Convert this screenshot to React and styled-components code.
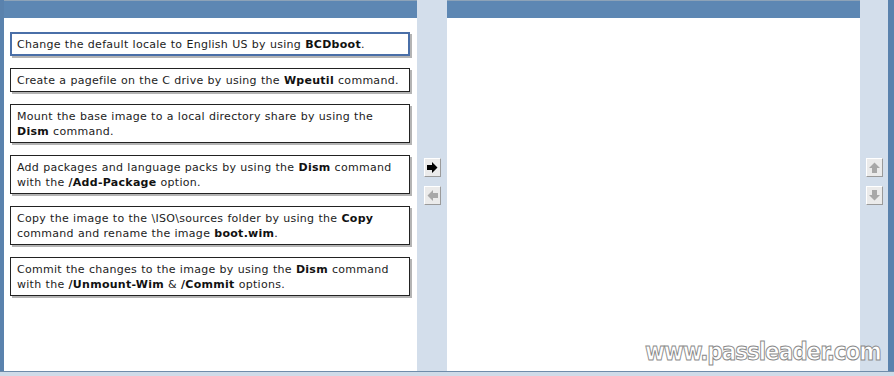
import React from 'react';
import styled, { createGlobalStyle } from 'styled-components';

const GlobalStyle = createGlobalStyle`
  html, body {
    margin: 0;
    padding: 0;
    background: #ffffff;
  }
`;

const Frame = styled.div`
  position: relative;
  width: 894px;
  height: 376px;
  display: flex;
  flex-direction: column;
  font-family: 'DejaVu Sans', Verdana, sans-serif;
  overflow: hidden;
`;

const Main = styled.div`
  display: flex;
  height: 371px;
`;

const Edge = styled.div`
  width: ${(p) => p.w}px;
  flex-shrink: 0;
  background: #5a82ad;
`;

const Panel = styled.div`
  width: 413px;
  flex-shrink: 0;
  display: flex;
  flex-direction: column;
  background: #ffffff;
`;

const TopBar = styled.div`
  height: 18px;
  background: #5d87b3;
  border-top: 1px solid #8da3b8;
  box-sizing: border-box;
`;

const List = styled.div`
  display: flex;
  flex-direction: column;
  gap: 12px;
  padding: 14px 0 0 6px;
`;

const Item = styled.div`
  width: 400px;
  box-sizing: border-box;
  border: ${(p) => (p.selected ? '2px solid #4a6fa8' : '1px solid #222')};
  padding: ${(p) => (p.selected ? '3px 5px 2px' : '4px 6px 3px')};
  background: #ffffff;
  box-shadow: 2px 2px 0 #b4b4b4;
  font-size: 11px;
  line-height: 15px;
  word-spacing: 0.3px;
  letter-spacing: 0.28px;
  color: #1c1c1c;

  b {
    font-weight: bold;
    color: #111;
  }
`;

const Rail = styled.div`
  width: ${(p) => p.w}px;
  flex-shrink: 0;
  background: #d3deeb;
  display: flex;
  flex-direction: column;
  align-items: center;
  gap: 9px;
  padding-top: 158px;
  box-sizing: border-box;
`;

const ArrowButton = styled.div`
  width: 17px;
  height: 19px;
  box-sizing: border-box;
  background: #ebebeb;
  border-top: 1px solid #ffffff;
  border-left: 1px solid #ffffff;
  border-right: 1px solid #9a9a9a;
  border-bottom: 1px solid #9a9a9a;
  display: flex;
  align-items: center;
  justify-content: center;
`;

const Footer = styled.div`
  height: 5px;
  background: #cfdbe8;
  border-top: 1px solid #6f8caa;
  box-sizing: border-box;
`;

const Watermark = styled.div`
  position: absolute;
  left: 645px;
  top: 338px;
  font-family: 'DejaVu Sans', sans-serif;
  font-weight: bold;
  font-size: 24px;
  letter-spacing: -1.2px;
  color: #ffffff;
  -webkit-text-stroke: 1px #8a8a8a;
  transform: scaleX(0.9);
  transform-origin: left top;
  white-space: nowrap;
`;

const Arrow = ({ dir, color }) => {
  const rot = { right: 0, left: 180, up: 270, down: 90 }[dir];
  return (
    <svg width="11" height="11" viewBox="0 0 11 11">
      <g transform={`rotate(${rot} 5.5 5.5)`}>
        <polygon points="0,3 5,3 5,0 10.5,5.5 5,11 5,8 0,8" fill={color} />
      </g>
    </svg>
  );
};

const items = [
  <>Change the default locale to English US by using <b>BCDboot</b>.</>,
  <>Create a pagefile on the C drive by using the <b>Wpeutil</b> command.</>,
  <>Mount the base image to a local directory share by using the <b>Dism</b> command.</>,
  <>Add packages and language packs by using the <b>Dism</b> command with the <b>/Add-Package</b> option.</>,
  <>Copy the image to the \ISO\sources folder by using the <b>Copy</b> command and rename the image <b>boot.wim</b>.</>,
  <>Commit the changes to the image by using the <b>Dism</b> command with the <b>/Unmount-Wim</b> &amp; <b>/Commit</b> options.</>,
];

export default function App() {
  return (
    <Frame>
      <GlobalStyle />
      <Main>
        <Edge w={4} />
        <Panel>
          <TopBar />
          <List>
            {items.map((content, i) => (
              <Item key={i} selected={i === 0}>
                {content}
              </Item>
            ))}
          </List>
        </Panel>
        <Rail w={30}>
          <ArrowButton>
            <Arrow dir="right" color="#000" />
          </ArrowButton>
          <ArrowButton>
            <Arrow dir="left" color="#a8a8a8" />
          </ArrowButton>
        </Rail>
        <Panel>
          <TopBar />
        </Panel>
        <Rail w={28}>
          <ArrowButton>
            <Arrow dir="up" color="#a8a8a8" />
          </ArrowButton>
          <ArrowButton>
            <Arrow dir="down" color="#a8a8a8" />
          </ArrowButton>
        </Rail>
        <Edge w={6} />
      </Main>
      <Footer />
      <Watermark>www.passleader.com</Watermark>
    </Frame>
  );
}
